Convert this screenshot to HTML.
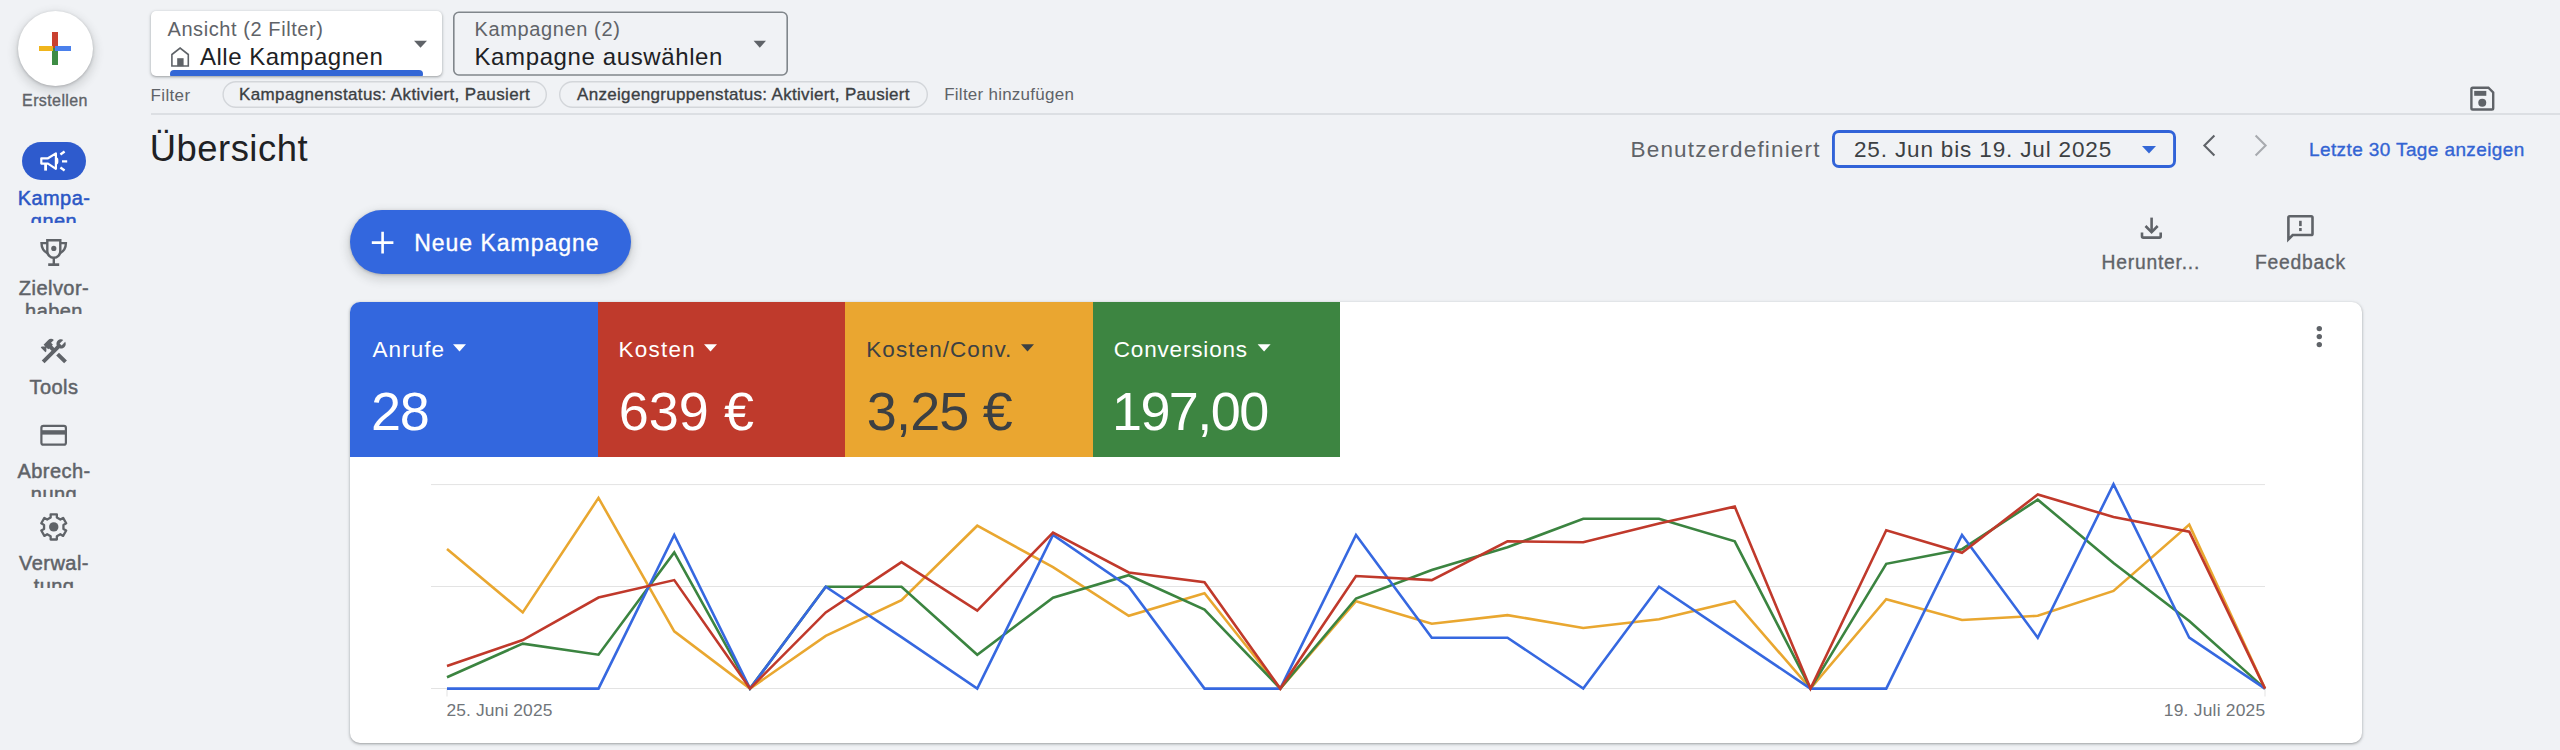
<!DOCTYPE html>
<html><head><meta charset="utf-8">
<style>
html,body{margin:0;padding:0;width:2560px;height:750px;overflow:hidden;background:#f0f2f5;}
body{position:relative;font-family:"Liberation Sans",sans-serif;}
.a{position:absolute;}
.t{position:absolute;line-height:1;white-space:nowrap;}
.md{-webkit-text-stroke:0.35px currentColor;}
svg.ov{position:absolute;left:0;top:0;width:2560px;height:750px;overflow:visible;}
.clip{position:absolute;overflow:hidden;}
</style></head><body>

<!-- ============ SIDEBAR ============ -->
<div class="a" style="left:17.7px;top:11px;width:75px;height:75px;border-radius:50%;background:#fff;box-shadow:0 1px 3px rgba(60,64,67,.3),0 4px 8px 3px rgba(60,64,67,.15);"></div>
<div class="a" style="left:52.3px;top:32px;width:5.6px;height:16px;background:#c9402f"></div>
<div class="a" style="left:52.3px;top:48px;width:5.6px;height:16.8px;background:#3d8c44"></div>
<div class="a" style="left:38.9px;top:45.6px;width:14px;height:5.3px;background:#f0b51c"></div>
<div class="a" style="left:55px;top:45.6px;width:16.2px;height:5.3px;background:#4a80ec"></div>
<div class="t md" style="left:0;width:110px;text-align:center;top:93px;font-size:16px;letter-spacing:0.4px;color:#5f6368">Erstellen</div>

<div class="a" style="left:21.7px;top:142.3px;width:64.2px;height:37.6px;border-radius:19px;background:#2e5bcd"></div>

<div class="clip" style="left:0;top:180px;width:108px;height:43px">
 <div class="t md" style="left:0;width:108px;text-align:center;top:7px;font-size:20px;line-height:23px;letter-spacing:0.45px;-webkit-text-stroke:0.5px currentColor;color:#2b57c5;white-space:normal">Kampa-<br>gnen</div>
</div>
<div class="clip" style="left:0;top:270px;width:108px;height:44px">
 <div class="t md" style="left:0;width:108px;text-align:center;top:7.4px;font-size:20px;line-height:23px;letter-spacing:0.45px;-webkit-text-stroke:0.5px currentColor;color:#5f6368;white-space:normal">Zielvor-<br>haben</div>
</div>
<div class="t md" style="left:0;width:108px;text-align:center;top:377.4px;font-size:20px;letter-spacing:0.45px;-webkit-text-stroke:0.5px currentColor;color:#5f6368">Tools</div>
<div class="clip" style="left:0;top:455px;width:108px;height:42.2px">
 <div class="t md" style="left:0;width:108px;text-align:center;top:5px;font-size:20px;line-height:23px;letter-spacing:0.45px;-webkit-text-stroke:0.5px currentColor;color:#5f6368;white-space:normal">Abrech-<br>nung</div>
</div>
<div class="clip" style="left:0;top:545px;width:108px;height:43.4px">
 <div class="t md" style="left:0;width:108px;text-align:center;top:6.8px;font-size:20px;line-height:23px;letter-spacing:0.45px;-webkit-text-stroke:0.5px currentColor;color:#5f6368;white-space:normal">Verwal-<br>tung</div>
</div>

<!-- ============ TOP FILTER BAR ============ -->
<div class="a" style="left:151px;top:11.2px;width:291px;height:64.8px;border-radius:5px;background:#fff;box-shadow:0 1px 2px rgba(60,64,67,.3),0 1px 3px 1px rgba(60,64,67,.15);overflow:hidden">
  <div class="a" style="left:19px;top:59.2px;width:253px;height:8px;border-radius:4px;background:#3367d6"></div>
</div>
<div class="t" style="left:167.5px;top:18.5px;font-size:20px;letter-spacing:0.58px;color:#5f6368">Ansicht (2 Filter)</div>
<div class="t" style="left:200.0px;top:45.2px;font-size:24px;letter-spacing:0.51px;color:#202124">Alle Kampagnen</div>

<div class="t" style="left:474.5px;top:18.5px;font-size:20px;letter-spacing:0.62px;color:#5f6368">Kampagnen (2)</div>
<div class="t" style="left:474.5px;top:45.2px;font-size:24px;letter-spacing:0.61px;color:#202124">Kampagne auswählen</div>

<div class="t" style="left:150.5px;top:86.5px;font-size:17px;letter-spacing:0.36px;color:#5f6368">Filter</div>
<div class="t md" style="left:239.0px;top:86.3px;font-size:17px;letter-spacing:0.37px;color:#3c4043">Kampagnenstatus: Aktiviert, Pausiert</div>
<div class="t md" style="left:577.0px;top:86.3px;font-size:17px;letter-spacing:0.32px;color:#3c4043">Anzeigengruppenstatus: Aktiviert, Pausiert</div>
<div class="t" style="left:944.2px;top:86.3px;font-size:17px;letter-spacing:0.25px;color:#5f6368">Filter hinzufügen</div>

<div class="a" style="left:151px;top:113px;width:2409px;height:2px;background:#dcdfe3"></div>

<!-- ============ HEADER ============ -->
<div class="t" style="left:149.8px;top:131.3px;font-size:36.4px;letter-spacing:0.5px;color:#202124">Übersicht</div>
<div class="t" style="left:1630.5px;top:138.5px;font-size:22.5px;letter-spacing:1.18px;color:#5f6368">Benutzerdefiniert</div>
<div class="t" style="left:1854.0px;top:138.5px;font-size:22.5px;letter-spacing:0.85px;color:#3c4043">25. Jun bis 19. Jul 2025</div>
<div class="t md" style="left:2309.0px;top:139.8px;font-size:19px;letter-spacing:0.39px;color:#3364d3">Letzte 30 Tage anzeigen</div>

<!-- ============ BUTTON ============ -->
<div class="a" style="left:350px;top:210.2px;width:281px;height:64.2px;border-radius:33px;background:#3367de;box-shadow:0 1px 3px rgba(60,64,67,.3),0 4px 8px 3px rgba(60,64,67,.15)"></div>
<div class="t md" style="left:414.2px;top:232.4px;font-size:23px;letter-spacing:0.98px;color:#fff">Neue Kampagne</div>

<div class="t md" style="left:2101.6px;top:253.2px;font-size:19.3px;letter-spacing:0.77px;color:#5f6368">Herunter...</div>
<div class="t md" style="left:2254.9px;top:253.2px;font-size:19.3px;letter-spacing:0.80px;color:#5f6368">Feedback</div>

<!-- ============ CARD ============ -->
<div class="a" style="left:350px;top:302px;width:2012.4px;height:440.7px;border-radius:10px;background:#fff;box-shadow:0 1px 2px rgba(60,64,67,.3),0 1px 3px 1px rgba(60,64,67,.15);overflow:hidden">
  <div class="a" style="left:0;top:0;width:247.6px;height:155.3px;background:#3367de"></div>
  <div class="a" style="left:247.6px;top:0;width:247.4px;height:155.3px;background:#bf3a2c"></div>
  <div class="a" style="left:495px;top:0;width:247.5px;height:155.3px;background:#eaa630"></div>
  <div class="a" style="left:742.5px;top:0;width:247.5px;height:155.3px;background:#3d8541"></div>
</div>
<div class="t" style="left:372.5px;top:339.3px;font-size:22.5px;letter-spacing:1.06px;color:#fff">Anrufe</div>
<div class="t" style="left:370.9px;top:384.1px;font-size:54px;letter-spacing:-1.20px;color:#fff">28</div>
<div class="t" style="left:618.5px;top:339.3px;font-size:22.5px;letter-spacing:1.22px;color:#fff">Kosten</div>
<div class="t" style="left:618.7px;top:384.1px;font-size:54px;letter-spacing:0.05px;color:#fff">639 €</div>
<div class="t" style="left:866.3px;top:339.3px;font-size:22.5px;letter-spacing:1.06px;color:#3c4043">Kosten/Conv.</div>
<div class="t" style="left:866.8px;top:384.1px;font-size:54px;letter-spacing:-0.84px;color:#3c4043">3,25 €</div>
<div class="t" style="left:1113.8px;top:339.3px;font-size:22.5px;letter-spacing:0.82px;color:#fff">Conversions</div>
<div class="t" style="left:1112.0px;top:384.1px;font-size:54px;letter-spacing:-1.60px;color:#fff">197,00</div>

<div class="t" style="left:446.5px;top:702.0px;font-size:17.4px;letter-spacing:0.12px;color:#70757a">25. Juni 2025</div>
<div class="t" style="left:2163.8px;top:702.0px;font-size:17.4px;letter-spacing:0.23px;color:#70757a">19. Juli 2025</div>

<svg class="ov" viewBox="0 0 2560 750">
 <!-- borders -->
 <rect x="453.8" y="12.3" width="333.4" height="62.7" rx="5" fill="none" stroke="#80868b" stroke-width="1.6"/>
 <rect x="223.1" y="81.75" width="323.2" height="25.5" rx="12.75" fill="none" stroke="#d3d6da" stroke-width="1.4"/>
 <rect x="559.7" y="81.75" width="367.6" height="25.5" rx="12.75" fill="none" stroke="#d3d6da" stroke-width="1.4"/>
 <rect x="1833.45" y="131.45" width="341.1" height="35.1" rx="5.5" fill="none" stroke="#3163d8" stroke-width="2.9"/>
 <!-- dropdown arrows -->
 <polygon points="414,40.8 427,40.8 420.5,47.7" fill="#5f6368"/>
 <polygon points="753.6,40.8 766,40.8 759.8,47.7" fill="#5f6368"/>
 <polygon points="2142,146 2156,146 2149,153.5" fill="#3367d6"/>
 <polygon points="453,344.3 466,344.3 459.5,351.6" fill="#fff"/>
 <polygon points="704,344.3 717,344.3 710.5,351.6" fill="#fff"/>
 <polygon points="1021,344.3 1034,344.3 1027.5,351.6" fill="#3c4043"/>
 <polygon points="1257.6,344.3 1270.6,344.3 1264.1,351.6" fill="#fff"/>

 <!-- chevrons -->
 <polyline points="2214.4,135.6 2204.4,145.6 2214.4,155.6" fill="none" stroke="#5f6368" stroke-width="2.1"/>
 <polyline points="2255.6,135.6 2265.6,145.6 2255.6,155.6" fill="none" stroke="#a8abaf" stroke-width="2.1"/>

 <!-- plus in button -->
 <path d="M382.6 231.8v21.6M371.8 242.6h21.6" stroke="#fff" stroke-width="2.6"/>


 <!-- megaphone -->
 <g fill="none" stroke="#fff" stroke-width="2.2" stroke-linejoin="round">
  <path d="M41.3 158.3 H48 L55.9 153.4 V168.8 L48 163.6 H41.3 Z"/>
 </g>
 <g fill="#fff">
  <ellipse cx="56.8" cy="160.9" rx="1.6" ry="3.4"/>
  <rect x="44.2" y="163" width="2.8" height="7.6"/>
 </g>
 <g stroke="#fff" stroke-width="2.4">
  <path d="M60.4 154.6 L64.6 151.6 M62 161.4 H67.2 M60.4 167.4 L64.6 170.4"/>
 </g>
 <!-- trophy -->
 <g fill="none" stroke="#5f6368" stroke-width="2.4">
  <path d="M47.3 240.3 H60.3 V251.3 A6.5 6.5 0 0 1 47.3 251.3 Z"/>
  <path d="M47.3 243.1 H41.5 C41.5 247.8 43.6 251.4 47.6 253.4"/>
  <path d="M60.3 243.1 H65.9 C65.9 247.8 63.8 251.4 59.8 253.4"/>
  <path d="M53.8 258 V264"/>
  <path d="M48.2 264.65 H59.2" stroke-width="2.7"/>
 </g>
 <circle cx="53.8" cy="248.4" r="2.6" fill="#5f6368"/>
 <!-- tools -->
 <path transform="translate(38.0 335.4) scale(1.32)" fill="#5f6368" d="M13.78 15.17l2.12-2.12 6 6-2.12 2.12zM17.5 10c1.93 0 3.5-1.57 3.5-3.5 0-.58-.16-1.12-.41-1.6l-2.7 2.7-1.49-1.49 2.7-2.7c-.48-.25-1.02-.41-1.6-.41C15.57 3 14 4.57 14 6.5c0 .41.08.8.21 1.16l-1.85 1.85-1.78-1.78.71-.71-1.41-1.41L12 3.49c-1.17-1.17-3.07-1.17-4.24 0L4.22 7.03l1.41 1.41H2.81l-.71.71 3.54 3.54.71-.71V9.15l1.41 1.41.71-.71 1.78 1.78-7.41 7.41 2.12 2.12L16.34 9.79c.36.13.75.21 1.16.21z"/>
 <!-- card -->
 <rect x="41.4" y="425.8" width="24.5" height="18.9" rx="2" fill="none" stroke="#5f6368" stroke-width="2.2"/>
 <rect x="41" y="430.2" width="25.5" height="4.4" fill="#5f6368"/>
 <!-- gear -->
 <path d="M50.65 517.50 L50.65 514.30 L56.85 514.30 L56.85 517.50 L60.34 519.52 L63.11 517.92 L66.21 523.28 L63.44 524.88 L63.44 528.92 L66.21 530.52 L63.11 535.88 L60.34 534.28 L56.85 536.30 L56.85 539.50 L50.65 539.50 L50.65 536.30 L47.16 534.28 L44.39 535.88 L41.29 530.52 L44.06 528.92 L44.06 524.88 L41.29 523.28 L44.39 517.92 L47.16 519.52Z" fill="none" stroke="#5f6368" stroke-width="2.3" stroke-linejoin="round"/>
 <circle cx="53.75" cy="526.9" r="4.7" fill="#5f6368"/>
 <!-- house -->
 <path d="M171.9 66 V54.5 L180.1 48.1 L188.3 54.5 V66 Z" fill="none" stroke="#5f6368" stroke-width="1.6"/>
 <rect x="177.2" y="58.2" width="6.4" height="8" fill="#5f6368"/>
 <!-- save -->
 <path d="M2471.4 89 Q2471.4 87.7 2472.7 87.7 H2488.4 L2493.2 92.5 V108.2 Q2493.2 109.5 2491.9 109.5 H2472.7 Q2471.4 109.5 2471.4 108.2 Z" fill="none" stroke="#5f6368" stroke-width="2.4"/>
 <rect x="2474.2" y="90.9" width="12.1" height="4.9" fill="#5f6368"/>
 <circle cx="2482.25" cy="102.7" r="4" fill="#5f6368"/>
 <!-- download -->
 <g fill="none" stroke="#5f6368" stroke-width="2.6">
  <path d="M2151.6 217.6 V231.5"/>
  <path d="M2145.5 226 L2151.6 232.1 L2157.7 226"/>
  <path d="M2142 232.5 V236.3 Q2142 237.6 2143.3 237.6 H2159.4 Q2160.7 237.6 2160.7 236.3 V232.5"/>
 </g>
 <!-- feedback -->
 <path d="M2288.4 239.3 V217.5 Q2288.4 216.2 2289.7 216.2 H2311.2 Q2312.5 216.2 2312.5 217.5 V233.7 Q2312.5 235 2311.2 235 H2292.7 Z" fill="none" stroke="#5f6368" stroke-width="2.6" stroke-linejoin="miter"/>
 <rect x="2299.1" y="220.8" width="2.6" height="5.3" fill="#5f6368"/>
 <rect x="2299.1" y="228" width="2.6" height="3.1" fill="#5f6368"/>
 <!-- grid -->
 <g stroke="#e3e3e3" stroke-width="1">
  <line x1="431" y1="484.6" x2="2265" y2="484.6"/>
  <line x1="431" y1="586.5" x2="2265" y2="586.5"/>
  <line x1="431" y1="688.5" x2="2265" y2="688.5"/>
  <line x1="447" y1="688" x2="447" y2="696.5"/>
  <line x1="2265" y1="688" x2="2265" y2="696.5"/>
 </g>
 <g fill="none" stroke-width="2.6" stroke-linejoin="miter" transform="translate(0 0.2)">
<polyline points="447.00,548.7 522.75,612.2 598.50,497.7 674.25,631.2 750.00,688.4 825.75,635.7 901.50,600.0 977.25,525.5 1053.00,567.0 1128.75,615.6 1204.50,593.1 1280.25,688.4 1356.00,601.0 1431.75,623.6 1507.50,614.9 1583.25,627.8 1659.00,619.1 1734.75,601.0 1810.50,688.4 1886.25,599.0 1962.00,619.8 2037.75,615.6 2113.50,590.7 2189.25,524.4 2265.00,688.4" stroke="#e9a730"/>
<polyline points="447.00,677.0 522.75,643.4 598.50,654.5 674.25,552.2 750.00,688.4 825.75,586.5 901.50,586.5 977.25,654.5 1053.00,597.6 1128.75,575.0 1204.50,609.4 1280.25,688.4 1356.00,598.3 1431.75,569.9 1507.50,547.0 1583.25,518.5 1659.00,518.5 1734.75,541.1 1810.50,688.4 1886.25,563.6 1962.00,549.0 2037.75,499.5 2113.50,562.9 2189.25,620.8 2265.00,688.4" stroke="#3b8440"/>
<polyline points="447.00,688.4 522.75,688.4 598.50,688.4 674.25,534.8 750.00,688.4 825.75,586.5 901.50,637.0 977.25,688.4 1053.00,534.8 1128.75,586.5 1204.50,688.4 1280.25,688.4 1356.00,534.8 1431.75,637.5 1507.50,637.5 1583.25,688.4 1659.00,586.5 1734.75,637.5 1810.50,688.4 1886.25,688.4 1962.00,534.8 2037.75,637.5 2113.50,483.9 2189.25,637.5 2265.00,688.4" stroke="#3668e0"/>
<polyline points="447.00,665.9 522.75,639.9 598.50,597.3 674.25,579.9 750.00,688.4 825.75,612.2 901.50,561.9 977.25,610.4 1053.00,532.4 1128.75,572.3 1204.50,582.0 1280.25,688.4 1356.00,575.8 1431.75,579.9 1507.50,541.1 1583.25,542.1 1659.00,523.4 1734.75,506.4 1810.50,688.4 1886.25,530.0 1962.00,552.5 2037.75,494.3 2113.50,516.8 2189.25,531.4 2265.00,688.4" stroke="#c0392b"/>
 </g>
 <!-- more vert -->
 <g fill="#5f6368"><circle cx="2319.3" cy="328.6" r="2.7"/><circle cx="2319.3" cy="336.6" r="2.7"/><circle cx="2319.3" cy="344.6" r="2.7"/></g>
</svg>
</body></html>
